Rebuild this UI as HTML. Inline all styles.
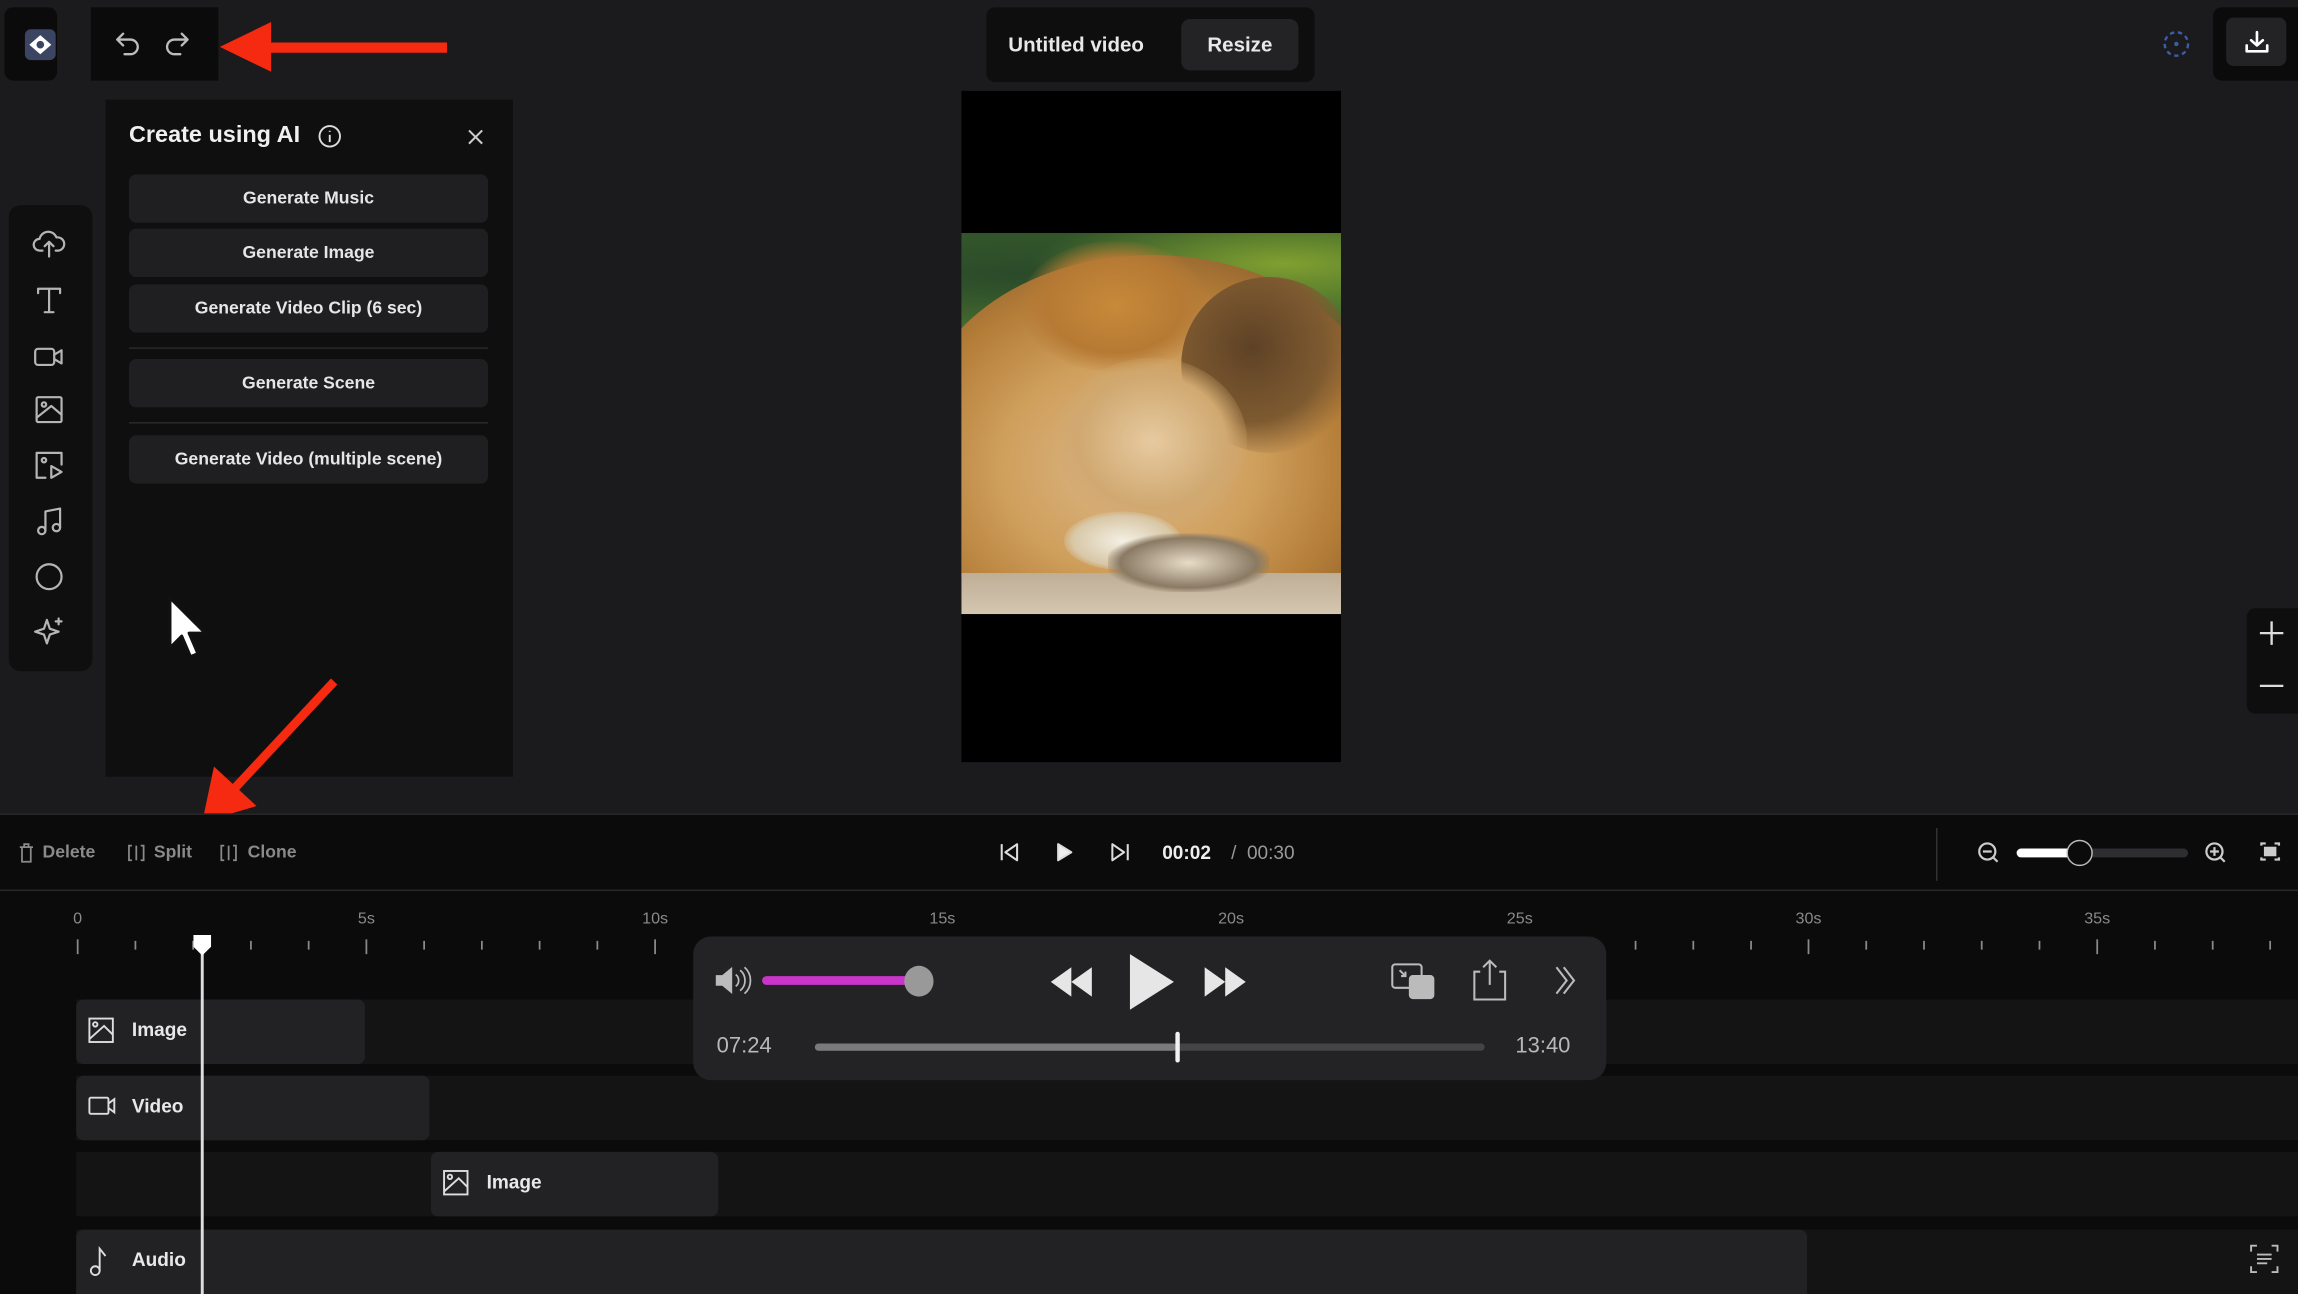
<!DOCTYPE html>
<html><head><meta charset="utf-8"><style>
*{margin:0;padding:0;box-sizing:border-box}
html,body{width:2298px;height:1294px;overflow:hidden;background:#1b1b1d}
#w{position:absolute;left:0;top:0;width:1568px;height:883px;transform:scale(1.46556);transform-origin:0 0;font-family:"Liberation Sans",sans-serif;color:#e8e8e8}
.a{position:absolute}
.btn{position:absolute;left:88px;width:245px;height:33px;background:#1f1f21;border-radius:5px;font-size:12px;font-weight:bold;color:#e6e6e6;text-align:center;line-height:33px}
.sep{position:absolute;left:88px;width:245px;height:1px;background:#2a2a2c}
.lbl{position:absolute;top:621px;font-size:11px;color:#8a8a8a;transform:translateX(-50%)}
.row{position:absolute;left:52px;width:1516px;height:44px;background:#141415}
.clip{position:absolute;height:44px;background:#222224;border-radius:5px;font-size:13px;font-weight:bold;color:#e8e8e8}
.clip span{position:absolute;left:38px;top:13px}
.clip svg{position:absolute;left:8px;top:12px}
.tb{position:absolute;top:574px;font-size:12px;font-weight:bold;color:#8a8a8a}
svg{overflow:visible}
</style></head><body><div id="w">

<div class="a" style="left:3px;top:5px;width:36px;height:50px;background:#0b0b0c;border-radius:6px"></div>
<div class="a" style="left:17px;top:20px;width:21px;height:21px;background:#3b4460;border-radius:4px"></div>
<svg class="a" style="left:17px;top:20px" width="21" height="21"><path d="M3 10.5 L10.5 4 L18 10.5 L10.5 17Z" fill="#fff"/><circle cx="10.5" cy="10.5" r="2.6" fill="#3b4460"/></svg>
<div class="a" style="left:62px;top:5px;width:87px;height:50px;background:#0b0b0c"></div>
<svg class="a" style="left:77px;top:21px" width="60" height="20" fill="none" stroke="#bdbdbd" stroke-width="1.6" stroke-linecap="round" stroke-linejoin="round">
<path d="M4 6 H12 a5 5 0 0 1 0 10 H8 M7 2 L3 6 L7 10"/>
<path d="M56 6 H48 a5 5 0 0 0 0 10 H52 M53 2 L57 6 L53 10" transform="translate(-6,0)"/>
</svg>
<svg class="a" style="left:0;top:0" width="320" height="60"><path d="M150 32 L185 15 L185 29 L305 29 L305 36 L185 36 L185 49Z" fill="#f52a10"/></svg>

<div class="a" style="left:673px;top:5px;width:224px;height:51px;background:#0e0e0f;border-radius:6px"></div>
<div class="a" style="left:688px;top:22px;font-size:14px;font-weight:bold;color:#e8e8e8">Untitled video</div>
<div class="a" style="left:806px;top:13px;width:80px;height:35px;background:#232325;border-radius:6px;font-size:14px;font-weight:bold;text-align:center;line-height:35px">Resize</div>

<svg class="a" style="left:1474px;top:19px" width="22" height="22"><circle cx="11" cy="11" r="8" fill="none" stroke="#3b5ea8" stroke-width="1.6" stroke-dasharray="3 2.5"/><circle cx="11" cy="11" r="1.5" fill="#3b5ea8"/></svg>
<div class="a" style="left:1510px;top:5px;width:58px;height:50px;background:#0b0b0c;border-radius:6px 0 0 6px"></div>
<div class="a" style="left:1519px;top:12px;width:41px;height:33px;background:#232325;border-radius:5px"></div>
<svg class="a" style="left:1530px;top:20px" width="20" height="18" fill="none" stroke="#fff" stroke-width="1.8" stroke-linecap="round" stroke-linejoin="round"><path d="M10 2 V11 M6 7.5 L10 11 L14 7.5 M3 11 V15 H17 V11"/></svg>

<div class="a" style="left:72px;top:68px;width:278px;height:462px;background:#0f0f10"></div>
<div class="a" style="left:88px;top:84px;font-size:16px;font-weight:bold;color:#f0f0f0">Create using AI</div>
<svg class="a" style="left:217px;top:85px" width="16" height="16" fill="none" stroke="#ddd" stroke-width="1.3"><circle cx="8" cy="8" r="7"/><path d="M8 7 V12 M8 4.2 V5"/></svg>
<svg class="a" style="left:319px;top:88px" width="11" height="11" stroke="#ccc" stroke-width="1.4"><path d="M1 1 L10 10 M10 1 L1 10"/></svg>
<div class="btn" style="top:119px">Generate Music</div>
<div class="btn" style="top:156px">Generate Image</div>
<div class="btn" style="top:194px">Generate Video Clip (6 sec)</div>
<div class="sep" style="top:237px"></div>
<div class="btn" style="top:245px">Generate Scene</div>
<div class="sep" style="top:288px"></div>
<div class="btn" style="top:297px">Generate Video (multiple scene)</div>

<svg class="a" style="left:114px;top:406px" width="30" height="46"><path d="M2 2 L2 36 L10 28 L16 42 L21 40 L15 26 L26 26Z" fill="#fff" stroke="#111" stroke-width="2" stroke-linejoin="round"/></svg>

<div class="a" style="left:6px;top:140px;width:57px;height:318px;background:#0f0f10;border-radius:8px"></div>
<svg class="a" style="left:22px;top:155px" width="24" height="292" fill="none" stroke="#b5b5b5" stroke-width="1.5" stroke-linecap="round" stroke-linejoin="round">
<path d="M7 16 H5 a4 4 0 0 1 0-8 a6 6 0 0 1 11.5-1 a4.5 4.5 0 0 1 1.5 9 H16 M11.5 20 V10 M8.5 13 L11.5 10 L14.5 13"/>
<g transform="translate(0,38)"><path d="M4 4 H19 V7 M4 4 V7 M11.5 4 V20 M8.5 20 H14.5"/></g>
<g transform="translate(0,76)"><rect x="2" y="7" width="13" height="11" rx="2"/><path d="M15 11 L20 8 V17 L15 14"/></g>
<g transform="translate(0,113)"><rect x="3" y="3" width="17" height="17" rx="1"/><circle cx="8" cy="8" r="1.5"/><path d="M3 17 L13 9 L20 15"/></g>
<g transform="translate(0,151)"><path d="M20 11 V3 H3 V20 H9"/><circle cx="8" cy="8" r="1.5"/><path d="M13 12 L20 16 L13 20Z"/></g>
<g transform="translate(0,189)"><path d="M9 18 V5 L19 3 V16"/><circle cx="6.5" cy="18" r="2.5"/><circle cx="16.5" cy="16" r="2.5"/></g>
<g transform="translate(0,227)"><circle cx="11.5" cy="11.5" r="8.5"/></g>
<g transform="translate(0,265)"><path d="M10 3 L12 9 L18 11 L12 13 L10 19 L8 13 L2 11 L8 9Z M18 2 V6 M16 4 H20"/></g>
</svg>

<div class="a" style="left:656px;top:62px;width:259px;height:458px;background:#000"></div>
<div class="a" style="left:656px;top:159px;width:259px;height:260px;overflow:hidden;background:linear-gradient(180deg,#355a2a 0%,#4f7530 30%,#6a5a3a 45%)">
 <div class="a" style="left:0;top:0;width:259px;height:70px;background:radial-gradient(ellipse at 85% 30%,#80a030,transparent 55%),radial-gradient(ellipse at 15% 40%,#2a4a2a,transparent 70%)"></div>
 <div class="a" style="left:-30px;top:15px;width:320px;height:240px;border-radius:50% 50% 30% 30%;background:radial-gradient(ellipse at 45% 60%,#ddb98a 0%,#cf9f5c 35%,#b47d38 60%,#7a5228 90%)"></div>
 <div class="a" style="left:40px;top:5px;width:130px;height:90px;border-radius:50%;background:radial-gradient(ellipse,#c78a3a 0%,#b67a34 50%,transparent 72%)"></div>
 <div class="a" style="left:150px;top:30px;width:120px;height:120px;border-radius:50%;background:radial-gradient(ellipse at 40% 40%,#5e4226,#7e5a30 50%,transparent 75%)"></div>
 <div class="a" style="left:65px;top:85px;width:130px;height:115px;border-radius:50%;background:radial-gradient(ellipse,#e6caa0 0%,#d0a870 55%,transparent 75%)"></div>
 <div class="a" style="left:70px;top:190px;width:80px;height:40px;border-radius:50%;background:radial-gradient(ellipse,#f4efe4,#d8c8a8 60%,transparent 75%)"></div>
 <div class="a" style="left:0;top:232px;width:259px;height:28px;background:linear-gradient(180deg,#bfae96,#d4c6b0)"></div>
 <div class="a" style="left:100px;top:205px;width:110px;height:40px;border-radius:40%;background:radial-gradient(ellipse,#e8dcc8,#8a7a64 60%,transparent 75%)"></div>
</div>

<div class="a" style="left:1533px;top:415px;width:35px;height:72px;background:#0e0e0f;border-radius:6px 0 0 6px"></div>
<svg class="a" style="left:1540px;top:423px" width="20" height="55" stroke="#ddd" stroke-width="1.6"><path d="M2 9 H18 M10 1 V17 M2 45 H18"/></svg>

<svg class="a" style="left:0;top:0" width="300" height="600"><path d="M228 465 L160 538" stroke="#f52a10" stroke-width="6"/><path d="M138 561 L146 523 L175 550Z" fill="#f52a10"/></svg>

<div class="a" style="left:0;top:555px;width:1568px;height:328px;background:#0b0b0c"></div>
<div class="a" style="left:0;top:555px;width:1568px;height:1px;background:#2a2a2c"></div>
<div class="a" style="left:0;top:607px;width:1568px;height:1px;background:#29292b"></div>
<svg class="a" style="left:12px;top:575px" width="200" height="14" fill="none" stroke="#8a8a8a" stroke-width="1.2"><path d="M1.5 3 H10.5 M3 3 V13 H9 V3 M4.5 3 V1 H7.5 V3"/><path d="M78 2 H76 V12 H78 M84 2 H86 V12 H84 M81 2 V12"/><path d="M141 2 H139 V12 H141 M147 2 H149 V12 H147 M144 2 V12"/></svg>
<div class="tb" style="left:29px">Delete</div>
<div class="tb" style="left:105px">Split</div>
<div class="tb" style="left:169px">Clone</div>

<svg class="a" style="left:682px;top:574px" width="90" height="16" fill="none" stroke="#ddd" stroke-width="1.4" stroke-linejoin="round"><path d="M1.5 2 V13 M12 2 L4 7.5 L12 13Z"/><path d="M40 2 L49 7.5 L40 13Z" fill="#eee"/><path d="M77 2 L85 7.5 L77 13Z M87.5 2 V13"/></svg>
<div class="a" style="left:793px;top:574px;font-size:13px;font-weight:bold;color:#eee">00:02</div>
<div class="a" style="left:840px;top:574px;font-size:13px;color:#999">/ &nbsp;00:30</div>

<div class="a" style="left:1321px;top:565px;width:1px;height:36px;background:#333"></div>
<svg class="a" style="left:1349px;top:574px" width="210" height="16" fill="none" stroke="#ccc" stroke-width="1.5"><circle cx="7" cy="7" r="5.5"/><path d="M4 7 H10 M11 11 L14 14"/><circle cx="162" cy="7" r="5.5"/><path d="M159 7 H165 M162 4 V10 M166 11 L169 14"/><path d="M194 3 V1.5 H197 M203 1.5 H206 V3 M206 11 V12.5 H203 M197 12.5 H194 V11"/><rect x="196.5" y="4.5" width="7" height="5" fill="#ccc"/></svg>
<div class="a" style="left:1376px;top:579px;width:117px;height:6px;background:#2e2e30;border-radius:3px"></div>
<div class="a" style="left:1376px;top:579px;width:43px;height:6px;background:#fff;border-radius:3px"></div>
<div class="a" style="left:1410px;top:573px;width:18px;height:18px;background:#0b0b0c;border:1.5px solid #bbb;border-radius:50%"></div>

<div class="lbl" style="left:53px">0</div><div class="lbl" style="left:250px">5s</div><div class="lbl" style="left:447px">10s</div><div class="lbl" style="left:643px">15s</div><div class="lbl" style="left:840px">20s</div><div class="lbl" style="left:1037px">25s</div><div class="lbl" style="left:1234px">30s</div><div class="lbl" style="left:1431px">35s</div>
<svg class="a" style="left:0;top:638px" width="1568" height="16" stroke="#8a8a8a" stroke-width="1.2">
<path d="M53 3V13M92.4 4V10M131.8 4V10M171.2 4V10M210.6 4V10M250 3V13M289.4 4V10M328.8 4V10M368.2 4V10M407.6 4V10M447 3V13M1116 4V10M1155.4 4V10M1194.8 4V10M1234 3V13M1273.4 4V10M1312.8 4V10M1352.2 4V10M1391.6 4V10M1431 3V13M1470.4 4V10M1509.8 4V10M1549 4V10"/></svg>

<div class="row" style="top:682px"></div>
<div class="row" style="top:734px"></div>
<div class="row" style="top:786px"></div>
<div class="row" style="top:839px"></div>
<div class="clip" style="left:52px;top:682px;width:197px"><svg width="18" height="18" fill="none" stroke="#ddd" stroke-width="1.3"><rect x="1" y="1" width="16" height="16"/><circle cx="5" cy="5" r="1.5"/><path d="M1 15 L11 6 L17 12"/></svg><span>Image</span></div>
<div class="clip" style="left:52px;top:734px;width:241px"><svg width="20" height="18" fill="none" stroke="#ddd" stroke-width="1.3"><rect x="1" y="3" width="13" height="11" rx="1"/><path d="M14 7 L18 4 V13 L14 10"/></svg><span>Video</span></div>
<div class="clip" style="left:294px;top:786px;width:196px"><svg width="18" height="18" fill="none" stroke="#ddd" stroke-width="1.3"><rect x="1" y="1" width="16" height="16"/><circle cx="5" cy="5" r="1.5"/><path d="M1 15 L11 6 L17 12"/></svg><span>Image</span></div>
<div class="clip" style="left:52px;top:839px;width:1181px;border-radius:5px 5px 0 0"><svg width="18" height="20" fill="none" stroke="#ddd" stroke-width="1.3"><circle cx="5" cy="16" r="3"/><path d="M8 16 V1 L12 6"/></svg><span>Audio</span></div>
<svg class="a" style="left:1535px;top:849px" width="20" height="20" fill="none" stroke="#bbb" stroke-width="1.3"><path d="M1 5 V1 H5 M15 1 H19 V5 M19 15 V19 H15 M5 19 H1 V15 M5 7 H15 M5 10 H15 M5 13 H12"/></svg>

<div class="a" style="left:137px;top:645px;width:1.5px;height:238px;background:#ddd"></div>
<svg class="a" style="left:131px;top:637px" width="14" height="16"><path d="M1 1 H13 V9 L7 15 L1 9Z" fill="#fff"/></svg>

<div class="a" style="left:473px;top:639px;width:623px;height:98px;background:#232325;border-radius:12px"></div>
<svg class="a" style="left:488px;top:658px" width="30" height="22" fill="none" stroke="#bbb" stroke-width="1.2"><path d="M1 8 H5 L11 3 V19 L5 14 H1Z" fill="#bbb"/><path d="M14 7 a5 5 0 0 1 0 8 M17 4 a9 9 0 0 1 0 14 M20 2 a12 12 0 0 1 0 18"/></svg>
<div class="a" style="left:520px;top:666px;width:107px;height:6px;background:#c935c9;border-radius:3px"></div>
<div class="a" style="left:617px;top:659px;width:20px;height:21px;background:#999;border-radius:50%"></div>
<svg class="a" style="left:714px;top:648px" width="142" height="42" fill="#e6e6e6"><path d="M3 22 L17 12 V32Z M17 22 L31 12 V32Z"/><path d="M57 3 L87 22 L57 41Z"/><path d="M108 12 L122 22 L108 32Z M122 12 L136 22 L122 32Z"/></svg>
<svg class="a" style="left:948px;top:654px" width="135" height="30" fill="none" stroke="#bbb" stroke-width="1.4"><rect x="2" y="4" width="20" height="16" rx="2"/><rect x="14" y="12" width="16" height="15" rx="2" fill="#bbb"/><path d="M7 8 L11 12 M11 9 V12 H8"/><path d="M62 9 H58 V28 H79 V9 H75 M68.5 2 V18 M64 6 L68.5 1.5 L73 6"/><path d="M114 6 L121 15 L114 24 M119 6 L126 15 L119 24"/></svg>
<div class="a" style="left:489px;top:705px;font-size:15px;color:#b8b8b8">07:24</div>
<div class="a" style="left:1034px;top:705px;font-size:15px;color:#b8b8b8">13:40</div>
<div class="a" style="left:556px;top:712px;width:457px;height:5px;background:#444;border-radius:3px"></div>
<div class="a" style="left:556px;top:712px;width:247px;height:5px;background:#7a7a7a;border-radius:3px"></div>
<div class="a" style="left:802px;top:704px;width:3px;height:21px;background:#f2f2f2;border-radius:2px"></div>

</div></body></html>
